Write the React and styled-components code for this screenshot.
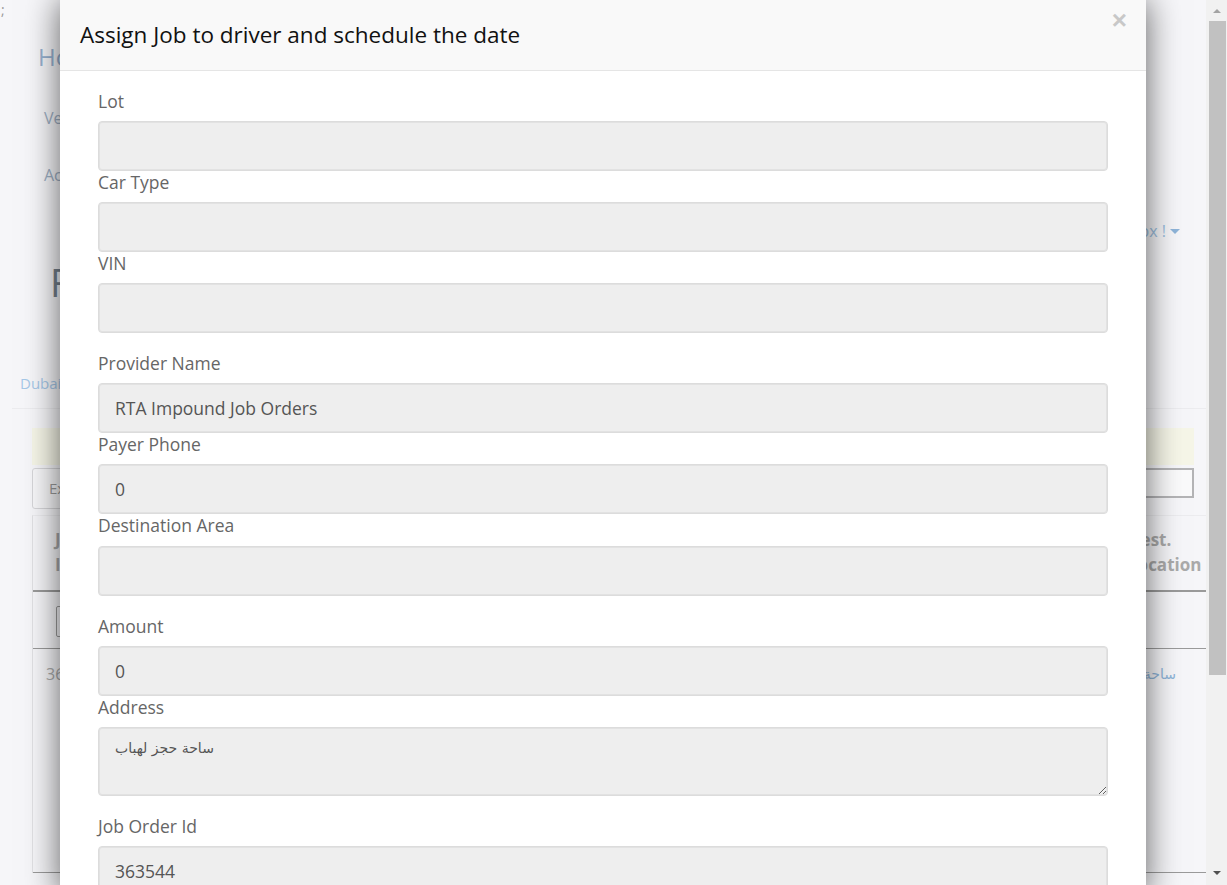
import React from "react";
import styled, { createGlobalStyle } from "styled-components";

const Global = createGlobalStyle`
  html, body { margin: 0; padding: 0; height: 885px; overflow: hidden; }
  body { font-family: "Open Sans", "DejaVu Sans", sans-serif; background: #f6f6f9; }
  * { box-sizing: border-box; }
`;

const Root = styled.div`
  display: flex;
  height: 885px;
  width: 1227px;
  overflow: hidden;
`;

const Viewport = styled.div`
  position: relative;
  flex: 1;
  height: 100%;
  overflow: hidden;
  background: #f6f6f9;
`;

/* ---------- background page ---------- */
const Page = styled.div`
  display: flex;
  flex-direction: column;
  font-family: "Open Sans", sans-serif;
`;

const Semicolon = styled.div`
  font-size: 14px;
  line-height: 20px;
  color: #9a9a9a;
  padding-left: 1px;
`;

const Brand = styled.div`
  font-size: 24px;
  line-height: 34px;
  color: #97b1d0;
  padding-left: 38px;
  margin-top: 20px;
`;

const NavItem = styled.div`
  font-size: 16px;
  line-height: 22px;
  color: #9fb0c4;
  padding-left: 44px;
  margin-top: ${(p) => p.$mt}px;
`;

const UserRow = styled.div`
  display: flex;
  align-items: center;
  justify-content: flex-end;
  padding-right: 26px;
  margin-top: 34px;
  font-size: 16px;
  line-height: 22px;
  color: #9cbfe0;
`;

const Caret = styled.span`
  display: inline-block;
  width: 0;
  height: 0;
  margin-left: 4px;
  border-left: 5px solid transparent;
  border-right: 5px solid transparent;
  border-top: 5px solid #8fb5da;
`;

const PageTitle = styled.div`
  font-size: 38px;
  line-height: 50px;
  color: #75808d;
  padding-left: 50px;
  margin-top: 15px;
`;

const Breadcrumb = styled.div`
  margin: 65px 0 0 12px;
  padding: 0 0 14px 8px;
  font-size: 15px;
  line-height: 22px;
  color: #a6c8e8;
  border-bottom: 1px solid #ececef;
  width: 1194px;
`;

const Alert = styled.div`
  margin: 19px 0 0 32px;
  width: 1162px;
  height: 37px;
  background: #f6f6e8;
`;

const Toolbar = styled.div`
  display: flex;
  justify-content: space-between;
  align-items: flex-start;
  margin: 3px 0 0 32px;
  width: 1162px;
`;

const GhostButton = styled.div`
  height: 41px;
  padding: 0 16px;
  border: 1px solid #d6d6d9;
  border-radius: 3px;
  background: #f7f7f9;
  font-size: 15px;
  line-height: 39px;
  color: #9a9a9a;
`;

const SearchBox = styled.div`
  width: 54px;
  height: 30px;
  border: 2px solid #b4b4b6;
  background: #fafafb;
`;

const Table = styled.div`
  margin: 6px 0 0 32px;
  width: 1174px;
  border-left: 1px solid #e2e2e5;
  display: flex;
  flex-direction: column;
  border-top: 1px solid #ececef;
`;

const TRow = styled.div`
  display: flex;
  justify-content: space-between;
  height: ${(p) => p.$h}px;
  border-bottom: ${(p) => p.$line || "none"};
  padding: ${(p) => p.$pad || "0"};
  color: ${(p) => p.$color || "#aaa"};
  font-weight: ${(p) => (p.$bold ? 700 : 400)};
  font-size: ${(p) => (p.$bold ? 17 : 16)}px;
  line-height: 25px;
`;

const Cell = styled.div`
  padding-left: ${(p) => p.$pl || 0}px;
  width: ${(p) => p.$w || "auto"};
`;

const FilterInput = styled.div`
  margin: 14px 0 0 23px;
  width: 60px;
  height: 31px;
  border: 1px solid #9c9c9c;
  border-radius: 2px;
`;

const ArabicLink = styled.div`
  width: 66px;
  font-family: "DejaVu Sans", sans-serif;
  font-size: 14px;
  line-height: 24px;
  color: #8fb5da;
  text-align: left;
`;

/* ---------- modal ---------- */
const Backdrop = styled.div`
  position: absolute;
  inset: 0;
  display: flex;
  align-items: flex-start;
  padding-left: 60px;
`;

const Modal = styled.div`
  width: 1086px;
  background: #fff;
  box-shadow: 0 0 32px rgba(0, 0, 0, 0.62);
  display: flex;
  flex-direction: column;
`;

const ModalHeader = styled.div`
  display: flex;
  justify-content: space-between;
  align-items: flex-start;
  height: 71px;
  padding: 0 20px;
  background: #f9f9f9;
  border-bottom: 1px solid #e5e5e5;
`;

const ModalTitle = styled.h4`
  margin: 0;
  font-family: "Open Sans", sans-serif;
  font-weight: 400;
  font-size: 22.5px;
  line-height: 69px;
  color: #111;
`;

const Close = styled.button`
  margin-top: 5px;
  margin-right: -1px;
  padding: 0;
  border: 0;
  background: transparent;
  font-family: "Liberation Sans", Arial, sans-serif;
  font-size: 26px;
  font-weight: 700;
  line-height: 30px;
  color: #c8c8c8;
  cursor: pointer;
`;

const ModalBody = styled.div`
  padding: 19px 38px 0 38px;
  display: flex;
  flex-direction: column;
`;

const Group = styled.div`
  display: flex;
  flex-direction: column;
  margin-bottom: ${(p) => (p.$spaced ? 19 : 0)}px;
`;

const Label = styled.label`
  display: block;
  font-size: 17.5px;
  line-height: 22px;
  margin-bottom: 9.1px;
  color: #666;
  font-weight: 400;
`;

const Input = styled.input`
  height: 50px;
  width: 100%;
  padding: 0 16px;
  border: 1px solid #dcdcdc;
  border-radius: 4px;
  background: #eee;
  font-family: "Open Sans", sans-serif;
  font-size: 17.5px;
  color: #555;
  outline: none;
  box-shadow: inset 0 0 0 1px #e2e2e2;
`;

const TextArea = styled.textarea`
  height: 69px;
  width: 100%;
  padding: 10px 16px 9px;
  border: 1px solid #dcdcdc;
  border-radius: 4px;
  background: #eee;
  font-family: "DejaVu Sans", "Liberation Sans", sans-serif;
  font-size: 14px;
  line-height: 20px;
  color: #555;
  resize: vertical;
  outline: none;
  box-shadow: inset 0 0 0 1px #e2e2e2;
`;

/* ---------- scrollbar ---------- */
const ScrollTrack = styled.div`
  width: 21px;
  height: 100%;
  background: #f1f1f1;
  display: flex;
  flex-direction: column;
  align-items: center;
`;

const ArrowBox = styled.div`
  height: ${(p) => p.$h}px;
  width: 100%;
  display: flex;
  align-items: center;
  justify-content: center;
`;

const ArrowUp = styled.div`
  width: 0;
  height: 0;
  border-left: 4px solid transparent;
  border-right: 4px solid transparent;
  border-bottom: 4px solid #a3a3a3;
`;

const ArrowDown = styled.div`
  width: 0;
  height: 0;
  border-left: 4px solid transparent;
  border-right: 4px solid transparent;
  border-top: 4px solid #505050;
`;

const Thumb = styled.div`
  width: 17px;
  height: 654px;
  margin-left: 1px;
  background: #c1c1c1;
`;

const Spacer = styled.div`
  flex: 1;
`;

const fields = [
  { label: "Lot", value: "" },
  { label: "Car Type", value: "" },
  { label: "VIN", value: "", spaced: true },
  { label: "Provider Name", value: "RTA Impound Job Orders" },
  { label: "Payer Phone", value: "0" },
  { label: "Destination Area", value: "", spaced: true },
  { label: "Amount", value: "0" },
];

export default function App() {
  return (
    <>
      <Global />
      <Root>
        <Viewport>
          <Page>
            <Semicolon>;</Semicolon>
            <Brand>Home</Brand>
            <NavItem $mt={33}>Vehicles</NavItem>
            <NavItem $mt={35}>Accounts</NavItem>
            <UserRow>
              Welcome, Fox !<Caret />
            </UserRow>
            <PageTitle>Finance</PageTitle>
            <Breadcrumb>Dubai</Breadcrumb>
            <Alert />
            <Toolbar>
              <GhostButton>Export</GhostButton>
              <SearchBox />
            </Toolbar>
            <Table>
              <TRow $h={76} $bold $line="2px solid #9a9a9a" $pad="11px 5px 0 0">
                <Cell $pl={22}>
                  Job
                  <br />
                  Id
                </Cell>
                <Cell $w="73px">
                  Dest.
                  <br />
                  Location
                </Cell>
              </TRow>
              <TRow $h={57} $line="1px solid #9a9a9a">
                <FilterInput />
              </TRow>
              <TRow $h={224} $line="1px solid #9a9a9a" $pad="13px 26px 0 0">
                <Cell $pl={13}>363544</Cell>
                <ArabicLink>ساحة حجز لهباب</ArabicLink>
              </TRow>
            </Table>
          </Page>

          <Backdrop>
            <Modal role="dialog">
              <ModalHeader>
                <ModalTitle>Assign Job to driver and schedule the date</ModalTitle>
                <Close aria-label="Close">×</Close>
              </ModalHeader>
              <ModalBody>
                {fields.map((f) => (
                  <Group key={f.label} $spaced={f.spaced}>
                    <Label>{f.label}</Label>
                    <Input readOnly value={f.value} />
                  </Group>
                ))}
                <Group $spaced>
                  <Label>Address</Label>
                  <TextArea readOnly value="ساحة حجز لهباب" />
                </Group>
                <Group>
                  <Label>Job Order Id</Label>
                  <Input readOnly value="363544" />
                </Group>
              </ModalBody>
            </Modal>
          </Backdrop>
        </Viewport>
        <ScrollTrack>
          <ArrowBox $h={21}>
            <ArrowUp />
          </ArrowBox>
          <Thumb />
          <Spacer />
          <ArrowBox $h={24}>
            <ArrowDown />
          </ArrowBox>
        </ScrollTrack>
      </Root>
    </>
  );
}
